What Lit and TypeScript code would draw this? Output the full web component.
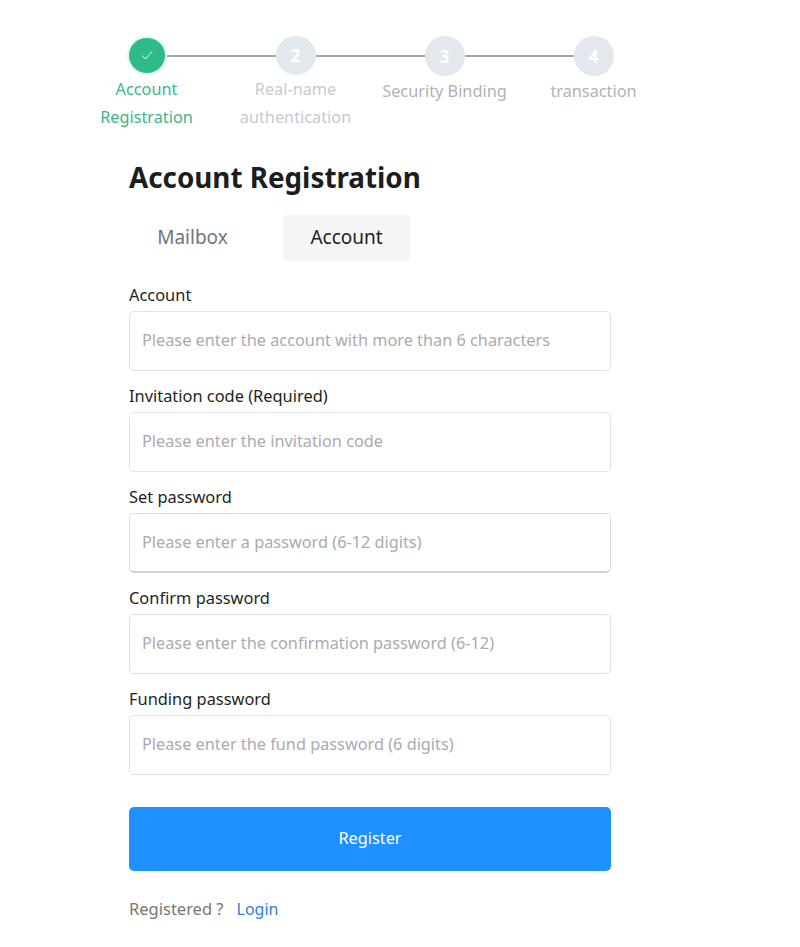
import { LitElement, html, css } from "lit";
import { customElement } from "lit/decorators.js";

const steps = [
  { n: "", label: ["Account", "Registration"], done: true },
  { n: "2", label: ["Real-name", "authentication"], muted: true },
  { n: "3", label: ["Security Binding"] },
  { n: "4", label: ["transaction"] },
];

const fields = [
  ["Account", "Please enter the account with more than 6 characters"],
  ["Invitation code (Required)", "Please enter the invitation code"],
  ["Set password", "Please enter a password (6-12 digits)"],
  ["Confirm password", "Please enter the confirmation password (6-12)"],
  ["Funding password", "Please enter the fund password (6 digits)"],
];

@customElement("app-root")
export class AppRoot extends LitElement {
  static styles = css`
    :host {
      display: block;
      width: 800px;
      height: 947px;
      overflow: hidden;
      background: #fff;
      font-family: "Noto Sans", "Open Sans", sans-serif;
      color: #1d1f22;
      box-sizing: border-box;
    }
    .steps {
      display: flex;
      padding: 36px 0 0 72px;
    }
    .step {
      width: 149px;
      display: flex;
      flex-direction: column;
      align-items: center;
      position: relative;
      height: 95px;
    }
    .line {
      position: absolute;
      top: 19px;
      left: 50%;
      width: 149px;
      height: 2px;
      background: #a3a5a8;
    }
    .dot {
      position: relative;
      width: 40px;
      height: 40px;
      border-radius: 50%;
      background: #e3e7ee;
      color: #fff;
      font-size: 17px;
      font-weight: 700;
      display: flex;
      align-items: center;
      justify-content: center;
      box-sizing: border-box;
    }
    .dot.done {
      background: #2fbb86;
      border: 2px solid #e2f7ef;
    }
    .lab {
      margin-top: 0.5px;
      font-size: 16.3px;
      line-height: 28px;
      text-align: center;
      color: #afb2b8;
      white-space: nowrap;
    }
    .lab.done { color: #3cb689; }
    .lab.muted { color: #c6c9cf; }
    .main {
      margin-left: 129px;
      width: 482px;
    }
    h1 {
      margin: 24px 0 0;
      padding-bottom: 1px;
      font-size: 27.8px;
      line-height: 44px;
      font-weight: 700;
      color: #1b1d20;
    }
    .tabs {
      display: flex;
      gap: 27px;
      margin-top: 15px;
    }
    .tab {
      width: 127px;
      height: 46px;
      border-radius: 4px;
      display: flex;
      align-items: center;
      justify-content: center;
      font-size: 19px;
      padding-bottom: 2px;
      box-sizing: border-box;
      color: #6d7580;
    }
    .tab.active {
      background: #f5f5f5;
      color: #1d1f22;
    }
    .form {
      margin-top: 20px;
      display: flex;
      flex-direction: column;
      gap: 11px;
    }
    .field label {
      display: block;
      font-size: 16.4px;
      line-height: 28px;
      margin-bottom: 2px;
      color: #1d1f22;
    }
    input {
      display: block;
      width: 100%;
      height: 60px;
      box-sizing: border-box;
      border: 1px solid #dfe1e4;
      border-radius: 5px;
      padding: 0 12px 2px;
      font: inherit;
      font-size: 16.3px;
      outline: none;
      background: #fff;
    }
    input::placeholder { color: #a9abae; opacity: 1; }
    input.shade {
      border-color: #dcdee0;
      border-bottom: 2px solid #cfd1d3;
    }
    .btn {
      margin-top: 32px;
      width: 100%;
      height: 64px;
      border: 0;
      border-radius: 5px;
      padding: 0 0 2px;
      background: #1e90ff;
      color: #fff;
      font: inherit;
      font-size: 16.3px;
      display: block;
    }
    .foot {
      margin-top: 23px;
      font-size: 16.5px;
      line-height: 30px;
      color: #74767a;
      display: flex;
      gap: 13px;
    }
    .foot a {
      color: #2f7fd6;
      font-size: 16px;
      text-decoration: none;
    }
  `;

  render() {
    return html`
      <div class="steps">
        ${steps.map(
          (s, i) => html`
            <div class="step">
              ${i < steps.length - 1 ? html`<div class="line"></div>` : ""}
              <div class="dot ${s.done ? "done" : ""}">
                ${s.done
                  ? html`<svg width="14" height="14" viewBox="0 0 14 14" fill="none" stroke="#fff" stroke-width="1"><path d="M2 7.5 L5.5 11 L12 3.5" /></svg>`
                  : s.n}
              </div>
              <div class="lab ${s.done ? "done" : ""} ${s.muted ? "muted" : ""}">
                ${s.label.map((l) => html`<div>${l}</div>`)}
              </div>
            </div>
          `
        )}
      </div>
      <div class="main">
        <h1>Account Registration</h1>
        <div class="tabs">
          <div class="tab">Mailbox</div>
          <div class="tab active">Account</div>
        </div>
        <div class="form">
          ${fields.map(
            ([l, p], i) => html`
              <div class="field">
                <label>${l}</label>
                <input class=${i === 2 ? "shade" : ""} placeholder=${p} />
              </div>
            `
          )}
        </div>
        <button class="btn">Register</button>
        <div class="foot"><span>Registered ?</span><a href="#">Login</a></div>
      </div>
    `;
  }
}
